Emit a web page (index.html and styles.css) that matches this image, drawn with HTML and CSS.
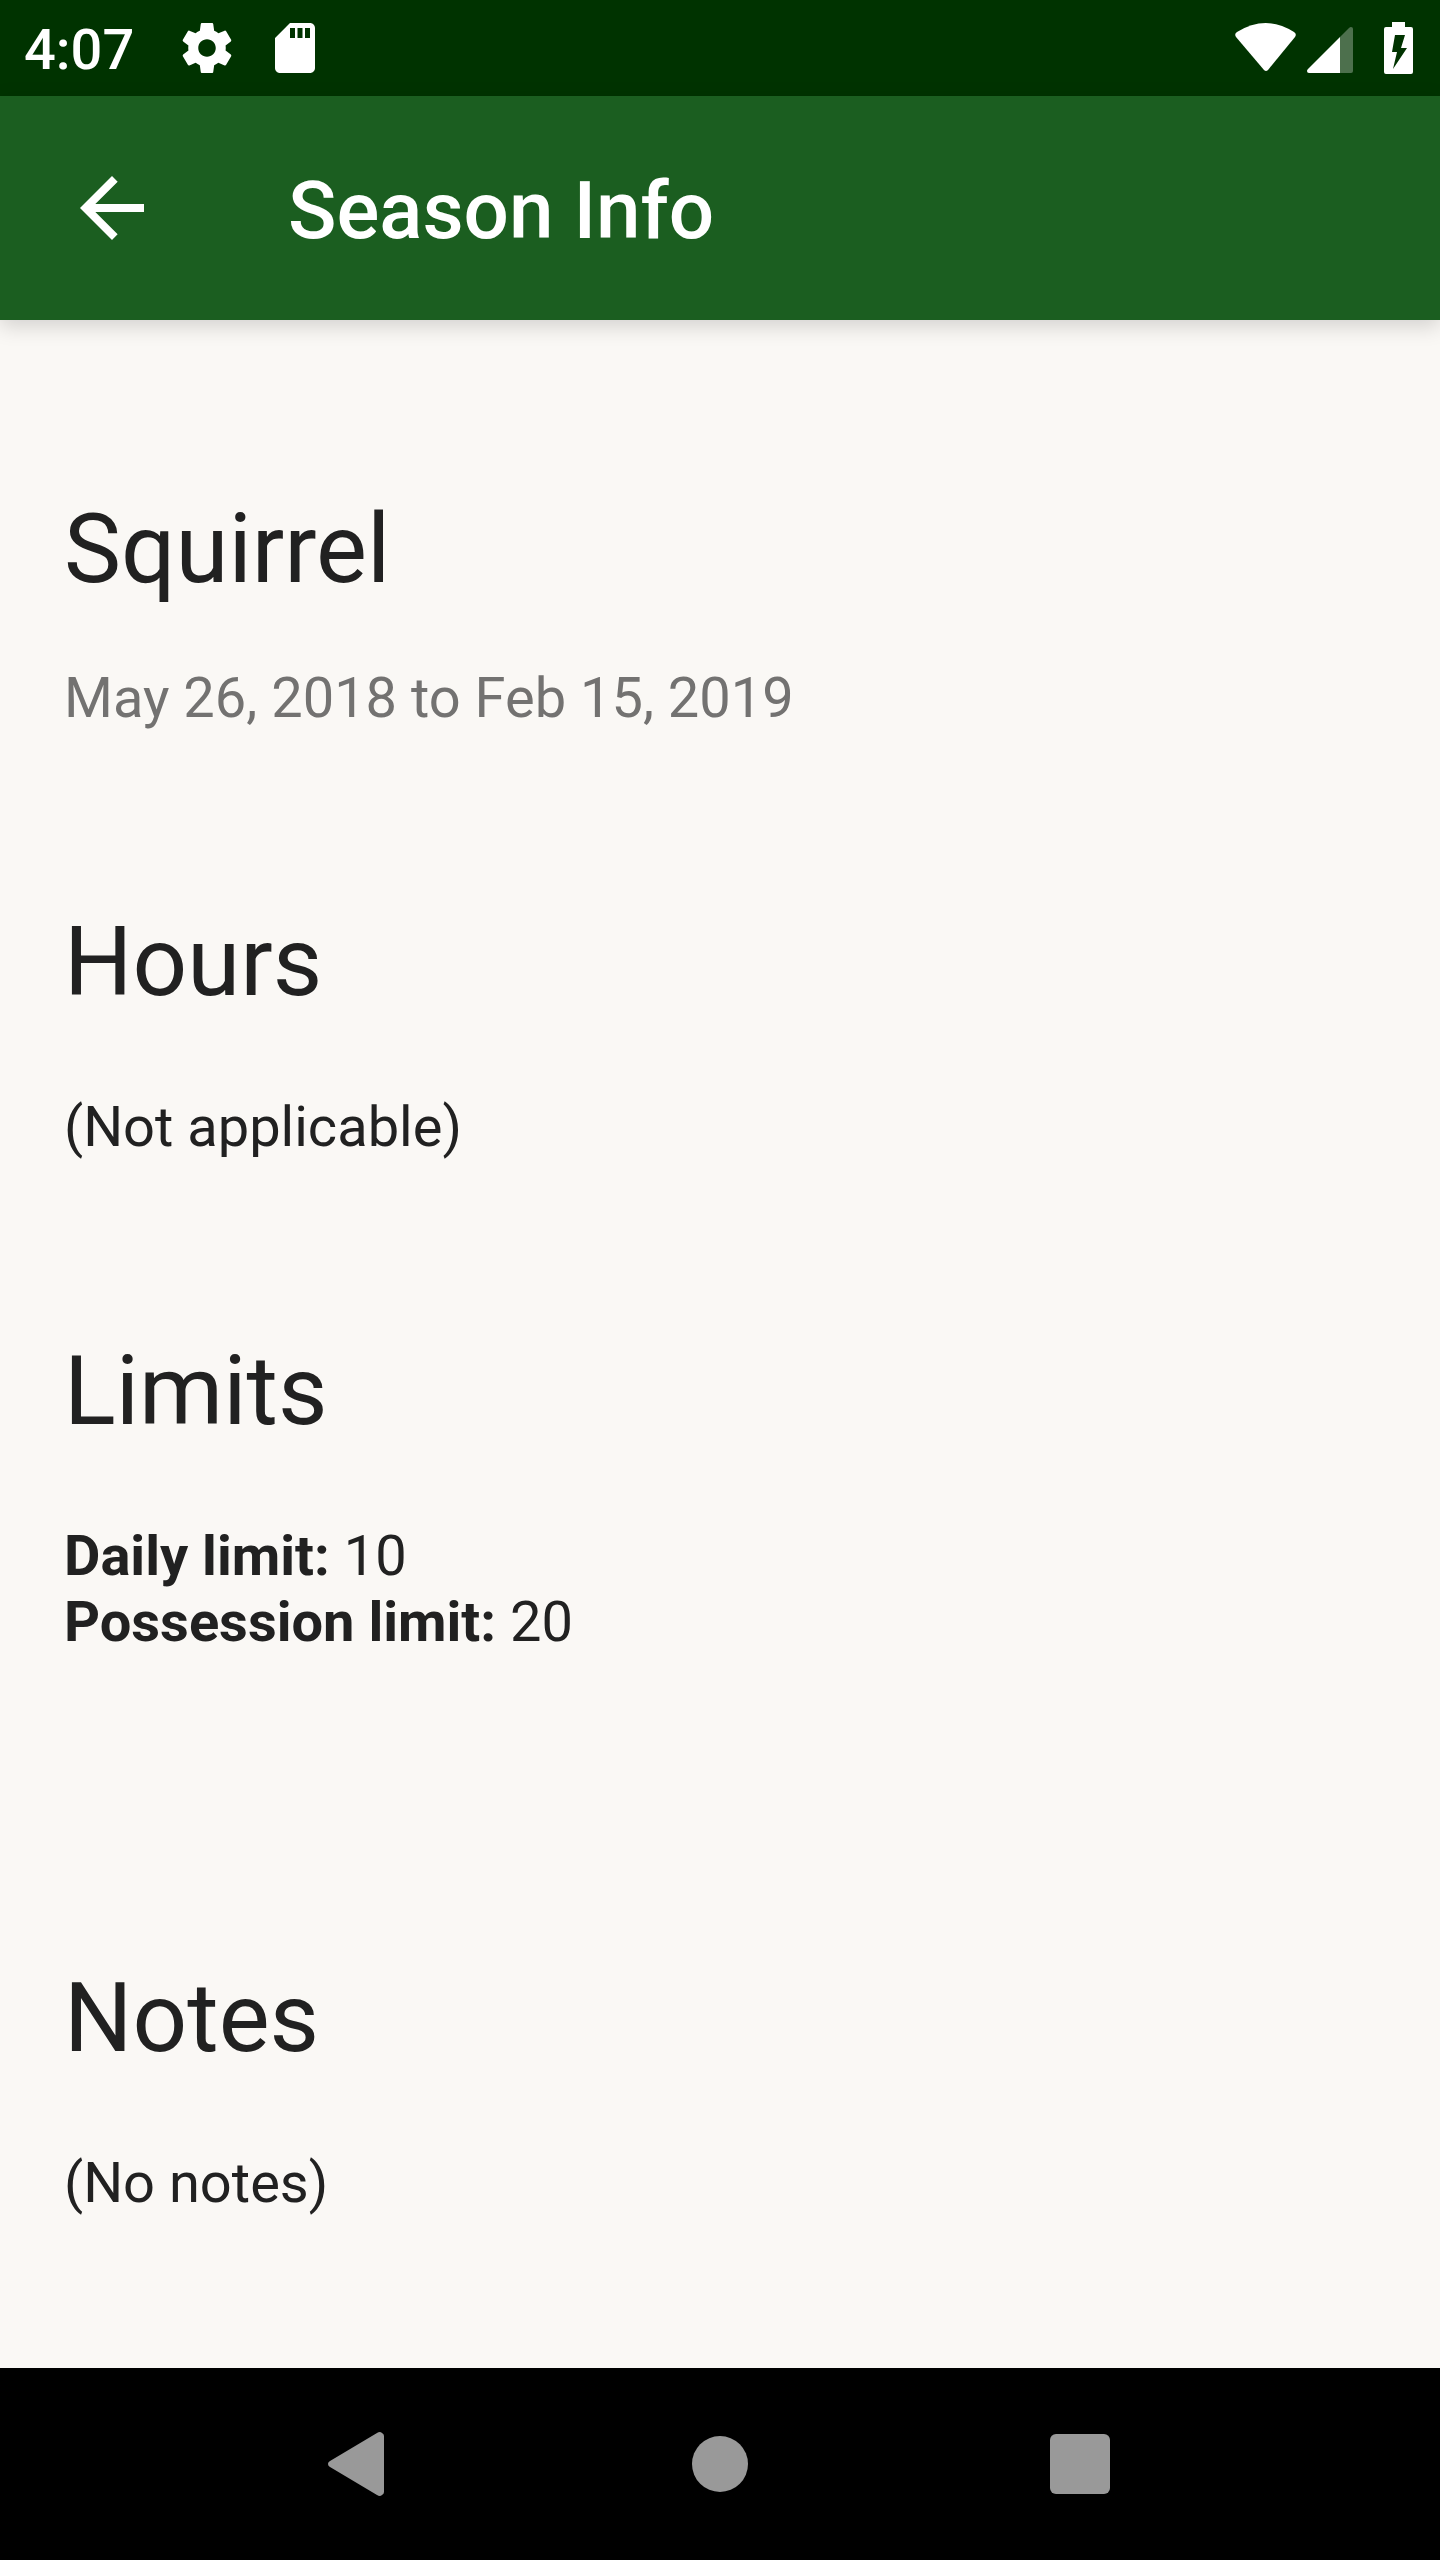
FILE: index.html
```html
<!DOCTYPE html>
<html lang="en">
<head>
<meta charset="utf-8">
<meta name="viewport" content="width=device-width, initial-scale=1">
<title>Season Info</title>
<link rel="stylesheet" href="styles.css">
</head>
<body>
<div class="status-bar">
  <time class="clock">4:07</time>
  <div class="status-notices">
    <svg class="notice-icon" viewBox="0 0 24 24" aria-hidden="true"><path d="M19.43 12.98c.04-.32.07-.64.07-.98s-.03-.66-.07-.98l2.11-1.65c.19-.15.24-.42.12-.64l-2-3.46c-.12-.22-.39-.3-.61-.22l-2.49 1c-.52-.4-1.08-.73-1.69-.98l-.38-2.65C14.46 2.18 14.25 2 14 2h-4c-.25 0-.46.18-.49.42l-.38 2.65c-.61.25-1.17.59-1.69.98l-2.49-1c-.23-.09-.49 0-.61.22l-2 3.46c-.13.22-.07.49.12.64l2.11 1.65c-.04.32-.07.65-.07.98s.03.66.07.98l-2.11 1.65c-.19.15-.24.42-.12.64l2 3.46c.12.22.39.3.61.22l2.49-1c.52.4 1.08.73 1.69.98l.38 2.65c.03.24.24.42.49.42h4c.25 0 .46-.18.49-.42l.38-2.65c.61-.25 1.17-.59 1.69-.98l2.49 1c.23.09.49 0 .61-.22l2-3.46c.12-.22.07-.49-.12-.64l-2.11-1.65zM12 15.500c-1.930 0-3.500-1.570-3.500-3.500s1.570-3.500 3.500-3.500 3.500 1.570 3.500 3.500-1.570 3.500-3.500 3.500z"/></svg>
    <svg class="notice-icon" viewBox="0 0 24 24" aria-hidden="true"><path fill-rule="evenodd" d="M18 2h-8L4 8v12c0 1.100.9 2 2 2h12c1.100 0 2-.9 2-2V4c0-1.100-.9-2-2-2zM10 4h2v4h-2zM13 4h2v4h-2zM16 4h2v4h-2z"/></svg>
  </div>
  <div class="status-system">
    <svg class="wifi" viewBox="0 0 62 50" aria-hidden="true"><path d="M2 9Q-1 11 1 14L29 47Q31 49 33 47L60 14Q62 11 59 9Q31-9 2 9Z"/></svg>
    <svg class="signal" viewBox="0 0 46 46" aria-hidden="true"><path class="signal-empty" d="M33 10L42 1Q43 0 44 0Q46 0 46 2V44Q46 46 44 46H33Z"/><path d="M33 10V46H2Q0 46 0 44Q0 43 1 42Z"/></svg>
    <svg class="battery" viewBox="0 0 29 52" aria-hidden="true"><path fill-rule="evenodd" d="M8 0H21V5H27Q29 5 29 7V50Q29 52 27 52H2Q0 52 0 50V7Q0 5 2 5H8ZM11 13L8 30H13L9 47L23 26H17L21 13Z"/></svg>
  </div>
</div>
<header class="app-bar">
  <button class="back-button" type="button" aria-label="Navigate up">
    <svg viewBox="0 0 24 24" aria-hidden="true"><path d="M20 11H7.830l5.590-5.590L12 4l-8 8 8 8 1.410-1.410L7.830 13H20z"/></svg>
  </button>
  <h1 class="app-title">Season Info</h1>
</header>
<main class="content">
  <section class="season">
    <h2>Squirrel</h2>
    <p class="dates">May 26, 2018 to Feb 15, 2019</p>
  </section>
  <section class="detail">
    <h2>Hours</h2>
    <p>(Not applicable)</p>
  </section>
  <section class="detail limits">
    <h2>Limits</h2>
    <p><strong>Daily limit:</strong> 10<br><strong>Possession limit:</strong> 20</p>
  </section>
  <section class="detail">
    <h2>Notes</h2>
    <p>(No notes)</p>
  </section>
</main>
<nav class="system-nav" aria-label="System">
  <button type="button" aria-label="Back"><svg viewBox="0 0 96 96" aria-hidden="true"><path d="M18 45L65 17Q68 15 70 17Q72 18 72 20V76Q72 78 70 79Q68 81 65 79L18 51Q16 50 16 48Q16 46 18 45Z"/></svg></button>
  <button type="button" aria-label="Home"><svg viewBox="0 0 96 96" aria-hidden="true"><circle cx="48" cy="48" r="28"/></svg></button>
  <button type="button" aria-label="Overview"><svg viewBox="0 0 96 96" aria-hidden="true"><rect x="18" y="18" width="60" height="60" rx="6"/></svg></button>
</nav>
</body>
</html>
```
FILE: styles.css
```css
* {
  box-sizing: border-box;
}

body {
  margin: 0;
  min-height: 100vh;
  display: flex;
  flex-direction: column;
  background: #faf8f5;
  color: #212121;
  font-family: Roboto, sans-serif;
  font-size: 56px;
  line-height: 66px;
}

h1, h2, p {
  margin: 0;
}

svg {
  display: block;
  fill: currentColor;
}

button {
  display: grid;
  place-items: center;
  padding: 0;
  border: 0;
  background: none;
  color: inherit;
}

.status-bar {
  display: flex;
  align-items: center;
  height: 96px;
  padding: 0 27px 0 24px;
  background: #003300;
  color: #fff;
}

.clock {
  padding-top: 4px;
  font-weight: 500;
}

.status-notices {
  display: flex;
  gap: 28px;
  margin-left: 43px;
}

.notice-icon {
  width: 60px;
  height: 60px;
}

.status-system {
  display: flex;
  align-items: flex-end;
  margin-left: auto;
}

.wifi {
  width: 62px;
  height: 50px;
  margin-bottom: 1px;
}

.signal {
  width: 46px;
  height: 46px;
  margin-bottom: 1px;
  margin-left: 10px;
}

.signal-empty {
  opacity: 0.3;
}

.battery {
  width: 29px;
  height: 52px;
  margin-left: 31px;
}

.app-bar {
  display: flex;
  align-items: center;
  gap: 128px;
  height: 224px;
  padding: 0 64px;
  background: #1b5e20;
  color: #fff;
  box-shadow: 0 6px 20px rgba(0, 0, 0, 0.16);
}

.back-button svg {
  width: 96px;
  height: 96px;
}

.app-title {
  padding-top: 6px;
  font-size: 80px;
  font-weight: 500;
  line-height: 94px;
}

.content {
  flex: 1;
  padding: 173px 64px 152px;
}

h2 {
  font-size: 96px;
  font-weight: 400;
  line-height: 112px;
}

.dates {
  margin-top: 60px;
  color: #737271;
}

.detail {
  margin-top: 175px;
}

.detail p {
  margin-top: 76px;
}

.limits {
  padding-bottom: 132px;
}

.system-nav {
  display: grid;
  grid-template-columns: repeat(3, 1fr);
  height: 192px;
  padding: 0 12.5%;
  background: #000;
  color: #999;
}

.system-nav svg {
  width: 96px;
  height: 96px;
}
```
